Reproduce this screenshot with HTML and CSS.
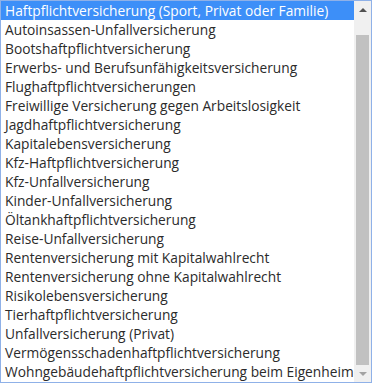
FILE: index.html
```html
<!DOCTYPE html>
<html lang="de">
<head>
    <meta charset="utf-8">
    <title>Versicherungsart</title>
    <link rel="stylesheet" href="styles.css">
</head>
<body>
    <div class="listbox">
        <ul class="options">
            <li class="selected">Haftpflichtversicherung (Sport, Privat oder Familie)</li>
            <li>Autoinsassen-Unfallversicherung</li>
            <li>Bootshaftpflichtversicherung</li>
            <li>Erwerbs- und Berufsunfähigkeitsversicherung</li>
            <li>Flughaftpflichtversicherungen</li>
            <li>Freiwillige Versicherung gegen Arbeitslosigkeit</li>
            <li>Jagdhaftpflichtversicherung</li>
            <li>Kapitalebensversicherung</li>
            <li>Kfz-Haftpflichtversicherung</li>
            <li>Kfz-Unfallversicherung</li>
            <li>Kinder-Unfallversicherung</li>
            <li>Öltankhaftpflichtversicherung</li>
            <li>Reise-Unfallversicherung</li>
            <li>Rentenversicherung mit Kapitalwahlrecht</li>
            <li>Rentenversicherung ohne Kapitalwahlrecht</li>
            <li>Risikolebensversicherung</li>
            <li>Tierhaftpflichtversicherung</li>
            <li>Unfallversicherung (Privat)</li>
            <li>Vermögensschadenhaftpflichtversicherung</li>
            <li>Wohngebäudehaftpflichtversicherung beim Eigenheim</li>
        </ul>
        <div class="scrollbar">
            <span class="arrow up"></span>
            <div class="track"><div class="thumb"></div></div>
            <span class="arrow down"></span>
        </div>
    </div>
</body>
</html>
```

FILE: styles.css
```css
body {
    margin: 0;
    padding: 0;
    background-color: #fff;
}
.listbox {
    width: 372px;
    height: 383px;
    box-sizing: border-box;
    border: 1px solid #8fb1e8;
    display: flex;
    overflow: hidden;
}
.options {
    flex: 1;
    list-style: none;
    margin: 0;
    padding: 0;
    font-family: 'Open Sans', sans-serif;
    font-size: 13.75px;
    color: #2b2b2b;
    overflow: hidden;
}
.options li {
    height: 19px;
    line-height: 19px;
    padding-left: 4px;
    white-space: nowrap;
}
.options li.selected {
    background-color: #3d8ff8;
    color: #fff;
}
.scrollbar {
    width: 17px;
    flex-shrink: 0;
    background-color: #f0f0f0;
    display: flex;
    flex-direction: column;
}
.arrow {
    height: 17px;
    display: flex;
    justify-content: center;
    align-items: center;
}
.arrow::before {
    content: '';
    border-left: 4px solid transparent;
    border-right: 4px solid transparent;
}
.arrow.up::before {
    border-bottom: 4px solid #505050;
}
.arrow.down::before {
    border-top: 4px solid #a3a3a3;
}
.track {
    flex: 1;
    padding: 17px 2px 0;
}
.thumb {
    height: 330px;
    background-color: #c1c1c1;
}
```
